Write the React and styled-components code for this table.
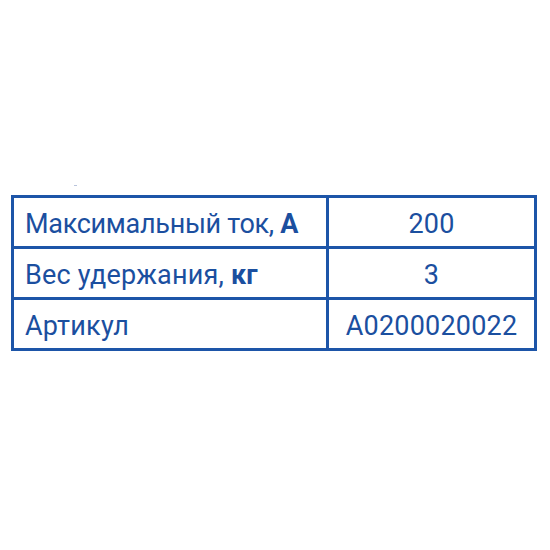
import React from "react";
import styled, { createGlobalStyle } from "styled-components";

const Global = createGlobalStyle`
  html, body { margin: 0; padding: 0; background: #ffffff; }
  body { font-family: Roboto, "Noto Sans", sans-serif; }
`;

const Page = styled.div`
  width: 550px;
  height: 550px;
  padding: 195px 0 0 11px;
  box-sizing: border-box;
  position: relative;
`;

const Dot = styled.span`
  position: absolute;
  left: 74px;
  top: 185px;
  width: 3px;
  height: 1px;
  background: #b9c4dc;
`;

const Grid = styled.div`
  display: grid;
  grid-template-columns: 312px 205px;
  grid-auto-rows: 48px;
  gap: 3px;
  padding: 3px;
  width: max-content;
  background: #1d55a8;
`;

const Cell = styled.div`
  background: #ffffff;
  display: flex;
  align-items: center;
  justify-content: ${(p) => (p.$center ? "center" : "flex-start")};
  padding: ${(p) => (p.$center ? "4px 0 0 0" : "4px 0 0 11px")};
  box-sizing: border-box;
  font-size: 27px;
  font-weight: 400;
  line-height: 1;
  color: #1b4f9f;
  white-space: pre;
`;

const Label = styled.span`
  letter-spacing: ${(p) => (p.$tight ? "-0.3px" : "0.2px")};
`;

const Unit = styled.b`
  font-weight: 700;
`;

const rows = [
  { label: "Максимальный ток, ", unit: "А", value: "200", tight: true },
  { label: "Вес удержания, ", unit: "кг", value: "3" },
  { label: "Артикул", unit: "", value: "A0200020022" },
];

export default function App() {
  return (
    <>
      <Global />
      <Page>
        <Dot />
        <Grid>
          {rows.map((r) => (
            <React.Fragment key={r.label}>
              <Cell>
                <Label $tight={r.tight}>
                  {r.label}
                  {r.unit && <Unit>{r.unit}</Unit>}
                </Label>
              </Cell>
              <Cell $center>
                <Label>{r.value}</Label>
              </Cell>
            </React.Fragment>
          ))}
        </Grid>
      </Page>
    </>
  );
}
